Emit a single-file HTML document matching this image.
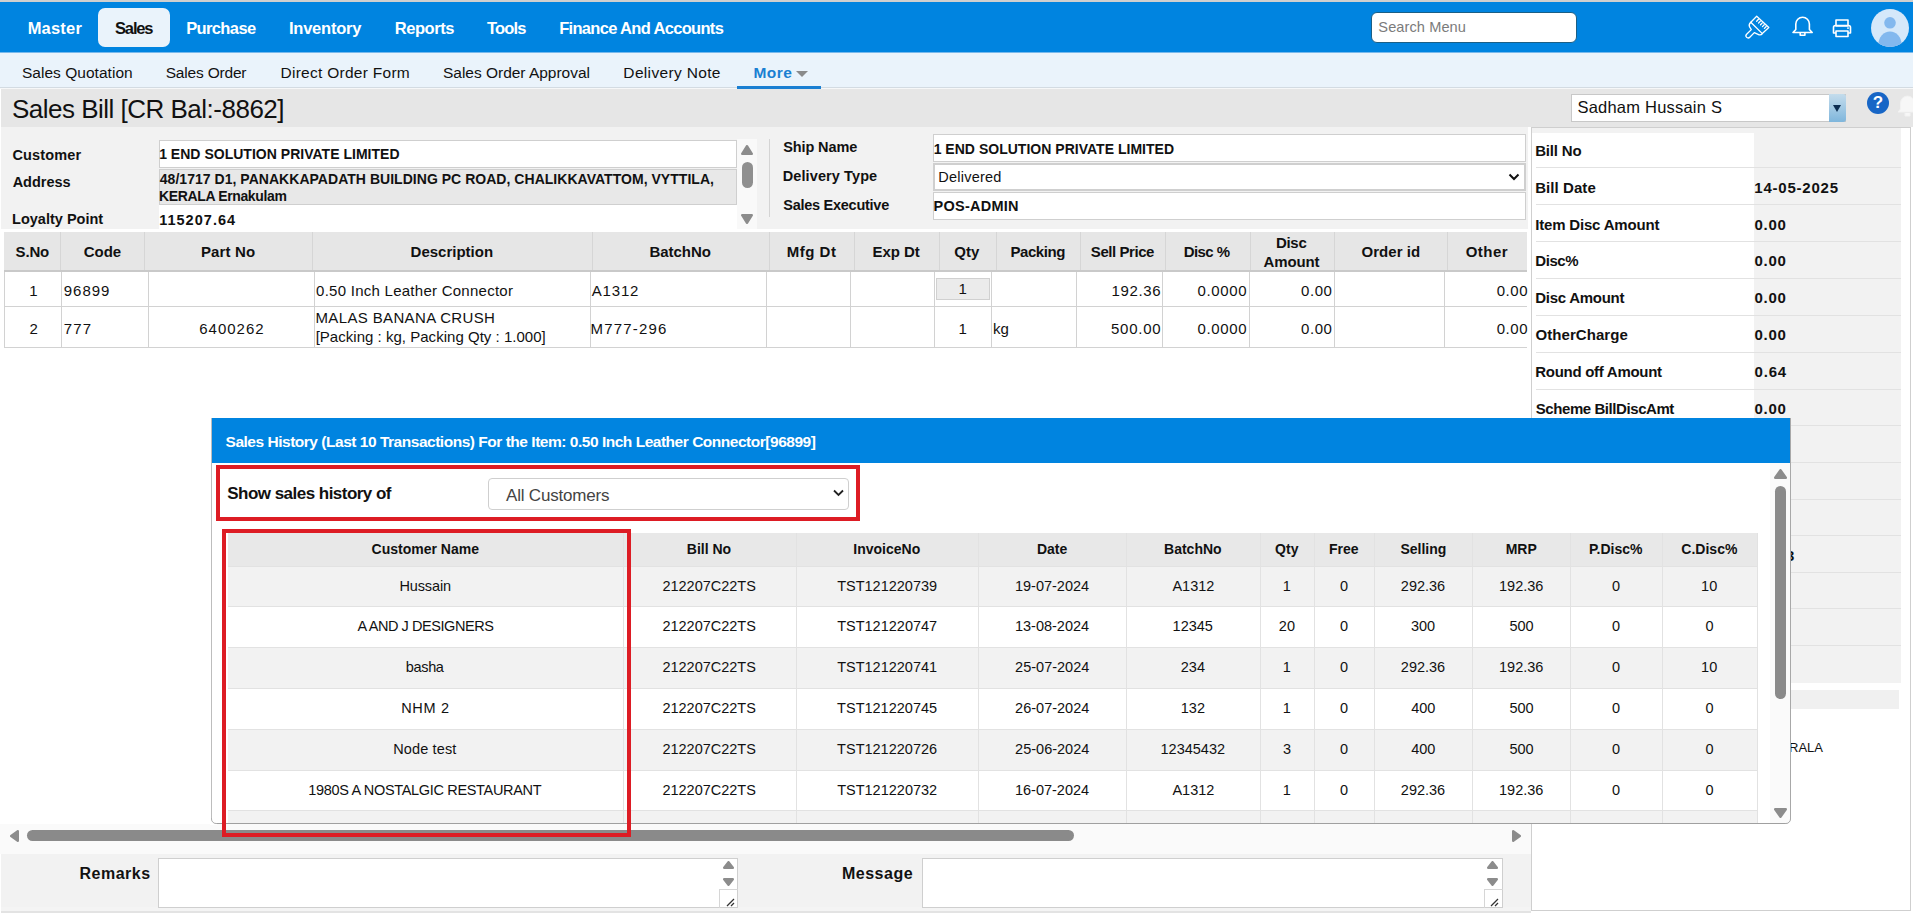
<!DOCTYPE html>
<html><head><meta charset="utf-8">
<style>
*{box-sizing:border-box;margin:0;padding:0}
html,body{width:1913px;height:913px;overflow:hidden;background:#fff;font-family:"Liberation Sans",sans-serif;color:#111}
.a{position:absolute}
.t{position:absolute;white-space:nowrap;line-height:1}
</style></head><body>
<div class="a" style="left:0px;top:0px;width:1913px;height:2px;background:#cfcfcf"></div>
<div class="a" style="left:0px;top:2px;width:1913px;height:50px;background:#0084e0"></div>
<div class="a" style="left:98px;top:8px;width:72px;height:39px;background:#eaf3fb;border-radius:7px"></div>
<div class="t" style="left:27.63px;top:20.43px;font-size:16.5px;font-weight:bold;color:#fff;letter-spacing:0.201px;">Master</div>
<div class="t" style="left:115.00px;top:20.43px;font-size:16.5px;font-weight:bold;letter-spacing:-1.152px;">Sales</div>
<div class="t" style="left:186.13px;top:20.43px;font-size:16.5px;font-weight:bold;color:#fff;letter-spacing:-0.614px;">Purchase</div>
<div class="t" style="left:288.93px;top:20.43px;font-size:16.5px;font-weight:bold;color:#fff;letter-spacing:-0.224px;">Inventory</div>
<div class="t" style="left:394.73px;top:20.43px;font-size:16.5px;font-weight:bold;color:#fff;letter-spacing:-0.426px;">Reports</div>
<div class="t" style="left:487.03px;top:20.43px;font-size:16.5px;font-weight:bold;color:#fff;letter-spacing:-0.852px;">Tools</div>
<div class="t" style="left:559.13px;top:20.43px;font-size:16.5px;font-weight:bold;color:#fff;letter-spacing:-0.674px;">Finance And Accounts</div>
<div class="a" style="left:1371px;top:12px;width:206px;height:31px;background:#fff;border:1px solid #1b5f86;border-radius:6px"></div>
<div class="t" style="left:1378.34px;top:19.64px;font-size:14.6px;color:#7b7b7b;letter-spacing:0.081px;">Search Menu</div>
<svg class="a" style="left:1740px;top:10px" width="36" height="34" viewBox="0 0 36 34">
<g fill="none" stroke="#fff" stroke-width="1.3" stroke-linejoin="round" stroke-linecap="round">
<path d="M16.7 6.3 L28.8 17.6 L22.3 23.6 L10.8 12.2 Z"/>
<path d="M10.8 12.2 Q8.3 14.6 9.6 16.8 L11.3 19.6 L6.6 24.2 A2.2 2.2 0 0 0 9.8 27.3 L14.3 22.6 L19.2 24.8 Q21.2 25.2 22.3 23.6"/>
<path d="M18.44 9.29 L16.66 11.19 M20.37 11.10 L18.60 13.00 M22.31 12.91 L20.53 14.81 M24.25 14.71 L22.47 16.62 M26.18 16.52 L24.41 18.42 "/>
</g></svg>
<svg class="a" style="left:1788px;top:10px" width="30" height="30" viewBox="0 0 30 30">
<g fill="none" stroke="#fff" stroke-width="1.6" stroke-linejoin="round">
<path d="M5 22.5 L7.8 19.5 L7.8 14 a6.8 6.8 0 0 1 13.6 0 L21.4 19.5 L24.2 22.5 Z"/>
<path d="M12.2 23 L12.2 25.3 L16.9 25.3 L16.9 23"/>
</g></svg>
<svg class="a" style="left:1828px;top:12px" width="28" height="28" viewBox="0 0 28 28">
<g fill="none" stroke="#fff" stroke-width="1.6" stroke-linejoin="round">
<rect x="8" y="8" width="12" height="6"/>
<path d="M8 21 L5.5 21 L5.5 15.5 a2 2 0 0 1 2 -2 L20.5 13.5 a2 2 0 0 1 2 2 L22.5 21 L20 21"/>
<rect x="8" y="19" width="12" height="5.5"/>
</g><rect x="19" y="15.5" width="2" height="1.2" fill="#fff"/></svg>
<svg class="a" style="left:1870px;top:8px" width="40" height="40" viewBox="0 0 40 40">
<defs><clipPath id="cc"><circle cx="20" cy="20" r="19"/></clipPath></defs>
<circle cx="20" cy="20" r="19" fill="#d5e8fa"/>
<g clip-path="url(#cc)" fill="#83b8ee"><circle cx="20" cy="14.8" r="5.8"/><ellipse cx="20" cy="36" rx="11.5" ry="12.5"/></g>
</svg>
<div class="a" style="left:0px;top:52px;width:1913px;height:35px;background:#eaf3fb"></div>
<div class="a" style="left:0px;top:52px;width:1913px;height:1px;background:#78b9ec"></div>
<div class="a" style="left:0px;top:87px;width:1913px;height:1px;background:#d3dbe2"></div>
<div class="a" style="left:0px;top:88px;width:1913px;height:1px;background:#f6f7f8"></div>
<div class="t" style="left:21.90px;top:64.98px;font-size:15.5px;letter-spacing:0.037px;">Sales Quotation</div>
<div class="t" style="left:165.70px;top:64.98px;font-size:15.5px;letter-spacing:-0.186px;">Sales Order</div>
<div class="t" style="left:280.46px;top:64.98px;font-size:15.5px;letter-spacing:0.276px;">Direct Order Form</div>
<div class="t" style="left:443.00px;top:64.98px;font-size:15.5px;letter-spacing:-0.017px;">Sales Order Approval</div>
<div class="t" style="left:623.36px;top:64.98px;font-size:15.5px;letter-spacing:0.336px;">Delivery Note</div>
<div class="t" style="left:753.39px;top:64.98px;font-size:15.5px;font-weight:bold;color:#1a7fd2;letter-spacing:0.502px;">More</div>
<div class="a" style="left:796px;top:71px;width:0;height:0;border-left:6.5px solid transparent;border-right:6.5px solid transparent;border-top:6px solid #8a8a8a"></div>
<div class="a" style="left:737px;top:86px;width:84px;height:3px;background:#1a7fd2"></div>
<div class="a" style="left:1px;top:89px;width:1912px;height:38px;background:#e6e6e6"></div>
<div class="t" style="left:11.93px;top:95.89px;font-size:26px;letter-spacing:-0.503px;">Sales Bill [CR Bal:-8862]</div>
<div class="a" style="left:1571px;top:94px;width:275px;height:28px;background:#fff;border:1px solid #c8c8c8"></div>
<div class="t" style="left:1577.46px;top:99.23px;font-size:16.5px;letter-spacing:0.216px;">Sadham Hussain S</div>
<div class="a" style="left:1829px;top:94px;width:17px;height:28px;background:linear-gradient(#c4dcec,#7fb6dc);border-radius:0 3px 3px 0"></div>
<div class="a" style="left:1833px;top:105px;width:0;height:0;border-left:4.5px solid transparent;border-right:4.5px solid transparent;border-top:7px solid #0d2e52"></div>
<svg class="a" style="left:1896px;top:92px" width="17" height="28" viewBox="0 0 17 28"><path d="M2 20 L4.5 17 L4.5 11 a7 7 0 0 1 14 0 L18.5 17 L21 20 Z M9 21 L9 24 L14 24 L14 21" fill="#f7f7f7" stroke="#f2f2f2" stroke-width="1"/></svg>
<div class="a" style="left:1867px;top:92px;width:22px;height:22px;border-radius:50%;background:#1766c6;color:#fff;font-weight:bold;font-size:17px;line-height:22px;text-align:center">?</div>
<div class="a" style="left:1px;top:127px;width:1527px;height:102px;background:#f2f2f2"></div>
<div class="t" style="left:12.42px;top:148.33px;font-size:14.5px;font-weight:bold;letter-spacing:0.155px;">Customer</div>
<div class="t" style="left:12.64px;top:174.63px;font-size:14.5px;font-weight:bold;letter-spacing:-0.010px;">Address</div>
<div class="t" style="left:12.06px;top:211.53px;font-size:14.5px;font-weight:bold;letter-spacing:0.008px;">Loyalty Point</div>
<div class="a" style="left:159px;top:140px;width:578px;height:28px;background:#fff;border:1px solid #cfcfcf"></div>
<div class="a" style="left:159px;top:169px;width:578px;height:36px;background:#e8e8e8;border:1px solid #cfcfcf"></div>
<div class="a" style="left:159px;top:205px;width:578px;height:24px;background:#fff"></div>
<div class="t" style="left:159.16px;top:146.85px;font-size:14px;font-weight:bold;letter-spacing:0.020px;">1 END SOLUTION PRIVATE LIMITED</div>
<div class="t" style="left:159.79px;top:171.95px;font-size:14px;font-weight:bold;letter-spacing:0.032px;">48/1717 D1, PANAKKAPADATH BUILDING PC ROAD, CHALIKKAVATTOM, VYTTILA,</div>
<div class="t" style="left:159.09px;top:188.85px;font-size:14px;font-weight:bold;letter-spacing:-0.369px;">KERALA Ernakulam</div>
<div class="t" style="left:159.13px;top:213.33px;font-size:14.5px;font-weight:bold;letter-spacing:1.028px;">115207.64</div>
<div class="a" style="left:737px;top:139px;width:20px;height:90px;background:#f9f9f9"></div>
<svg class="a" style="left:741px;top:145px" width="12" height="10" viewBox="0 0 12 10"><polygon points="6.00,1.20 10.80,8.80 1.20,8.80" fill="#8c8c8c" stroke="#8c8c8c" stroke-width="2.4" stroke-linejoin="round"/></svg>
<div class="a" style="left:742px;top:162px;width:11px;height:26px;background:#8f8f8f;border-radius:6px"></div>
<svg class="a" style="left:741px;top:214px" width="12" height="10" viewBox="0 0 12 10"><polygon points="1.20,1.20 10.80,1.20 6.00,8.80" fill="#8c8c8c" stroke="#8c8c8c" stroke-width="2.4" stroke-linejoin="round"/></svg>
<div class="a" style="left:769px;top:139px;width:1px;height:78px;background:#d4d4d4"></div>
<div class="t" style="left:783.27px;top:139.73px;font-size:14.5px;font-weight:bold;letter-spacing:-0.119px;">Ship Name</div>
<div class="t" style="left:782.76px;top:168.73px;font-size:14.5px;font-weight:bold;letter-spacing:0.101px;">Delivery Type</div>
<div class="t" style="left:783.27px;top:198.33px;font-size:14.5px;font-weight:bold;letter-spacing:-0.263px;">Sales Executive</div>
<div class="a" style="left:933px;top:134px;width:593px;height:28px;background:#fff;border:1px solid #cfcfcf"></div>
<div class="a" style="left:933px;top:163px;width:593px;height:28px;background:#fff;border:2px solid #cfcfcf"></div>
<div class="a" style="left:933px;top:192px;width:593px;height:28px;background:#fff;border:1px solid #cfcfcf"></div>
<div class="t" style="left:933.66px;top:141.65px;font-size:14px;font-weight:bold;letter-spacing:0.020px;">1 END SOLUTION PRIVATE LIMITED</div>
<div class="t" style="left:938.34px;top:169.73px;font-size:14.5px;letter-spacing:0.230px;">Delivered</div>
<div class="t" style="left:933.56px;top:199.23px;font-size:14.5px;font-weight:bold;letter-spacing:0.243px;">POS-ADMIN</div>
<svg class="a" style="left:1507px;top:171px" width="14" height="12" viewBox="0 0 14 12"><path d="M2.5 3.5 L7 8 L11.5 3.5" fill="none" stroke="#111" stroke-width="2"/></svg>
<div class="a" style="left:4px;top:232px;width:1523px;height:38px;background:#e6e6e6"></div>
<div class="a" style="left:4px;top:270px;width:1523px;height:2px;background:#c9c9c9"></div>
<div class="a" style="left:60px;top:232px;width:1px;height:38px;background:#d6d6d6"></div>
<div class="a" style="left:144px;top:232px;width:1px;height:38px;background:#d6d6d6"></div>
<div class="a" style="left:312px;top:232px;width:1px;height:38px;background:#d6d6d6"></div>
<div class="a" style="left:592px;top:232px;width:1px;height:38px;background:#d6d6d6"></div>
<div class="a" style="left:769px;top:232px;width:1px;height:38px;background:#d6d6d6"></div>
<div class="a" style="left:854px;top:232px;width:1px;height:38px;background:#d6d6d6"></div>
<div class="a" style="left:939px;top:232px;width:1px;height:38px;background:#d6d6d6"></div>
<div class="a" style="left:996px;top:232px;width:1px;height:38px;background:#d6d6d6"></div>
<div class="a" style="left:1080px;top:232px;width:1px;height:38px;background:#d6d6d6"></div>
<div class="a" style="left:1165px;top:232px;width:1px;height:38px;background:#d6d6d6"></div>
<div class="a" style="left:1250px;top:232px;width:1px;height:38px;background:#d6d6d6"></div>
<div class="a" style="left:1334px;top:232px;width:1px;height:38px;background:#d6d6d6"></div>
<div class="a" style="left:1447px;top:232px;width:1px;height:38px;background:#d6d6d6"></div>
<div class="a" style="left:4px;top:272px;width:1px;height:75px;background:#d2d2d2"></div>
<div class="a" style="left:61px;top:272px;width:1px;height:75px;background:#d2d2d2"></div>
<div class="a" style="left:148px;top:272px;width:1px;height:75px;background:#d2d2d2"></div>
<div class="a" style="left:314px;top:272px;width:1px;height:75px;background:#d2d2d2"></div>
<div class="a" style="left:590px;top:272px;width:1px;height:75px;background:#d2d2d2"></div>
<div class="a" style="left:766px;top:272px;width:1px;height:75px;background:#d2d2d2"></div>
<div class="a" style="left:850px;top:272px;width:1px;height:75px;background:#d2d2d2"></div>
<div class="a" style="left:934px;top:272px;width:1px;height:75px;background:#d2d2d2"></div>
<div class="a" style="left:991px;top:272px;width:1px;height:75px;background:#d2d2d2"></div>
<div class="a" style="left:1076px;top:272px;width:1px;height:75px;background:#d2d2d2"></div>
<div class="a" style="left:1162px;top:272px;width:1px;height:75px;background:#d2d2d2"></div>
<div class="a" style="left:1249px;top:272px;width:1px;height:75px;background:#d2d2d2"></div>
<div class="a" style="left:1334px;top:272px;width:1px;height:75px;background:#d2d2d2"></div>
<div class="a" style="left:1444px;top:272px;width:1px;height:75px;background:#d2d2d2"></div>
<div class="a" style="left:4px;top:306px;width:1523px;height:1px;background:#d2d2d2"></div>
<div class="a" style="left:4px;top:347px;width:1523px;height:1px;background:#d2d2d2"></div>
<div class="t" style="left:15.55px;top:244.10px;font-size:15px;font-weight:bold;letter-spacing:-0.158px;">S.No</div>
<div class="t" style="left:83.70px;top:244.10px;font-size:15px;font-weight:bold;letter-spacing:-0.025px;">Code</div>
<div class="t" style="left:200.93px;top:244.10px;font-size:15px;font-weight:bold;letter-spacing:0.158px;">Part No</div>
<div class="t" style="left:410.56px;top:244.10px;font-size:15px;font-weight:bold;">Description</div>
<div class="t" style="left:649.38px;top:244.10px;font-size:15px;font-weight:bold;letter-spacing:-0.012px;">BatchNo</div>
<div class="t" style="left:786.73px;top:244.10px;font-size:15px;font-weight:bold;letter-spacing:0.510px;">Mfg Dt</div>
<div class="t" style="left:872.57px;top:244.10px;font-size:15px;font-weight:bold;letter-spacing:-0.070px;">Exp Dt</div>
<div class="t" style="left:954.35px;top:244.10px;font-size:15px;font-weight:bold;">Qty</div>
<div class="t" style="left:1010.48px;top:244.10px;font-size:15px;font-weight:bold;letter-spacing:-0.429px;">Packing</div>
<div class="t" style="left:1090.85px;top:244.10px;font-size:15px;font-weight:bold;letter-spacing:-0.447px;">Sell Price</div>
<div class="t" style="left:1183.68px;top:244.10px;font-size:15px;font-weight:bold;letter-spacing:-0.570px;">Disc %</div>
<div class="t" style="left:1361.50px;top:244.10px;font-size:15px;font-weight:bold;letter-spacing:0.032px;">Order id</div>
<div class="t" style="left:1465.75px;top:244.10px;font-size:15px;font-weight:bold;letter-spacing:0.444px;">Other</div>
<div class="t" style="left:1275.92px;top:235.00px;font-size:15px;font-weight:bold;letter-spacing:-0.275px;">Disc</div>
<div class="t" style="left:1263.57px;top:253.80px;font-size:15px;font-weight:bold;letter-spacing:-0.160px;">Amount</div>
<div class="t" style="left:29.21px;top:282.80px;font-size:15px;">1</div>
<div class="t" style="left:29.44px;top:320.80px;font-size:15px;">2</div>
<div class="t" style="left:63.73px;top:282.80px;font-size:15px;letter-spacing:0.987px;">96899</div>
<div class="t" style="left:63.65px;top:320.80px;font-size:15px;letter-spacing:1.262px;">777</div>
<div class="t" style="left:199.15px;top:320.80px;font-size:15px;letter-spacing:1.025px;">6400262</div>
<div class="t" style="left:316.10px;top:282.80px;font-size:15px;letter-spacing:0.258px;">0.50 Inch Leather Connector</div>
<div class="t" style="left:315.50px;top:310.20px;font-size:15px;letter-spacing:0.357px;">MALAS BANANA CRUSH</div>
<div class="t" style="left:315.65px;top:329.00px;font-size:15px;letter-spacing:0.024px;">[Packing : kg, Packing Qty : 1.000]</div>
<div class="t" style="left:591.70px;top:282.80px;font-size:15px;letter-spacing:0.850px;">A1312</div>
<div class="t" style="left:590.50px;top:320.80px;font-size:15px;letter-spacing:1.186px;">M777-296</div>
<div class="a" style="left:936px;top:278px;width:54px;height:22px;background:#ebebeb;border:1px solid #d0d0d0"></div>
<div class="t" style="left:958.61px;top:281.30px;font-size:15px;">1</div>
<div class="t" style="left:958.61px;top:320.80px;font-size:15px;">1</div>
<div class="t" style="left:993.02px;top:320.80px;font-size:15px;">kg</div>
<div class="t" style="left:1111.38px;top:282.80px;font-size:15px;letter-spacing:0.685px;">192.36</div>
<div class="t" style="left:1111.00px;top:320.80px;font-size:15px;letter-spacing:0.745px;">500.00</div>
<div class="t" style="left:1197.40px;top:282.80px;font-size:15px;letter-spacing:0.645px;">0.0000</div>
<div class="t" style="left:1301.10px;top:282.80px;font-size:15px;letter-spacing:0.550px;">0.00</div>
<div class="t" style="left:1496.70px;top:282.80px;font-size:15px;letter-spacing:0.550px;">0.00</div>
<div class="t" style="left:1197.40px;top:320.80px;font-size:15px;letter-spacing:0.645px;">0.0000</div>
<div class="t" style="left:1301.10px;top:320.80px;font-size:15px;letter-spacing:0.550px;">0.00</div>
<div class="t" style="left:1496.70px;top:320.80px;font-size:15px;letter-spacing:0.550px;">0.00</div>
<div class="a" style="left:1531px;top:127px;width:380px;height:784px;background:#fff;border:1px solid #cfcfcf"></div>
<div class="a" style="left:1532px;top:128px;width:369px;height:5px;background:#f2f2f2"></div>
<div class="a" style="left:1754px;top:133px;width:147px;height:550px;background:#f2f2f2"></div>
<div class="t" style="left:1535.23px;top:142.80px;font-size:15px;font-weight:bold;letter-spacing:-0.183px;">Bill No</div>
<div class="a" style="left:1536px;top:167px;width:365px;height:1px;background:#e2e2e2"></div>
<div class="t" style="left:1535.23px;top:179.67px;font-size:15px;font-weight:bold;letter-spacing:0.062px;">Bill Date</div>
<div class="t" style="left:1754.30px;top:179.67px;font-size:15px;font-weight:bold;letter-spacing:0.783px;">14-05-2025</div>
<div class="a" style="left:1536px;top:204px;width:365px;height:1px;background:#e2e2e2"></div>
<div class="t" style="left:1535.23px;top:216.54px;font-size:15px;font-weight:bold;letter-spacing:-0.185px;">Item Disc Amount</div>
<div class="t" style="left:1754.60px;top:216.54px;font-size:15px;font-weight:bold;letter-spacing:0.675px;">0.00</div>
<div class="a" style="left:1536px;top:241px;width:365px;height:1px;background:#e2e2e2"></div>
<div class="t" style="left:1535.23px;top:253.41px;font-size:15px;font-weight:bold;letter-spacing:-0.412px;">Disc%</div>
<div class="t" style="left:1754.60px;top:253.41px;font-size:15px;font-weight:bold;letter-spacing:0.675px;">0.00</div>
<div class="a" style="left:1536px;top:278px;width:365px;height:1px;background:#e2e2e2"></div>
<div class="t" style="left:1535.23px;top:290.28px;font-size:15px;font-weight:bold;letter-spacing:-0.275px;">Disc Amount</div>
<div class="t" style="left:1754.60px;top:290.28px;font-size:15px;font-weight:bold;letter-spacing:0.675px;">0.00</div>
<div class="a" style="left:1536px;top:315px;width:365px;height:1px;background:#e2e2e2"></div>
<div class="t" style="left:1535.60px;top:327.15px;font-size:15px;font-weight:bold;letter-spacing:0.047px;">OtherCharge</div>
<div class="t" style="left:1754.60px;top:327.15px;font-size:15px;font-weight:bold;letter-spacing:0.675px;">0.00</div>
<div class="a" style="left:1536px;top:352px;width:365px;height:1px;background:#e2e2e2"></div>
<div class="t" style="left:1535.23px;top:364.02px;font-size:15px;font-weight:bold;letter-spacing:-0.280px;">Round off Amount</div>
<div class="t" style="left:1754.60px;top:364.02px;font-size:15px;font-weight:bold;letter-spacing:0.767px;">0.64</div>
<div class="a" style="left:1536px;top:389px;width:365px;height:1px;background:#e2e2e2"></div>
<div class="t" style="left:1535.75px;top:400.89px;font-size:15px;font-weight:bold;letter-spacing:-0.428px;">Scheme BillDiscAmt</div>
<div class="t" style="left:1754.60px;top:400.89px;font-size:15px;font-weight:bold;letter-spacing:0.675px;">0.00</div>
<div class="a" style="left:1536px;top:425px;width:365px;height:1px;background:#e2e2e2"></div>
<div class="a" style="left:1536px;top:462px;width:365px;height:1px;background:#e2e2e2"></div>
<div class="a" style="left:1536px;top:499px;width:365px;height:1px;background:#e2e2e2"></div>
<div class="a" style="left:1536px;top:535px;width:365px;height:1px;background:#e2e2e2"></div>
<div class="a" style="left:1536px;top:572px;width:365px;height:1px;background:#e2e2e2"></div>
<div class="a" style="left:1536px;top:608px;width:365px;height:1px;background:#e2e2e2"></div>
<div class="a" style="left:1536px;top:645px;width:365px;height:1px;background:#e2e2e2"></div>
<div class="a" style="left:1540px;top:690px;width:359px;height:19px;background:#f0f0f0"></div>
<div class="t" style="left:1786.12px;top:548.30px;font-size:15px;font-weight:bold;">3</div>
<div class="t" style="left:1788.96px;top:741.00px;font-size:13px;letter-spacing:0.037px;">RALA</div>
<div class="a" style="left:0px;top:824px;width:1531px;height:30px;background:#fafafa"></div>
<svg class="a" style="left:10px;top:830px" width="9" height="12" viewBox="0 0 9 12"><polygon points="1.20,6.00 7.80,1.20 7.80,10.80" fill="#8c8c8c" stroke="#8c8c8c" stroke-width="2.4" stroke-linejoin="round"/></svg>
<div class="a" style="left:27px;top:830px;width:1047px;height:11px;background:#8a8a8a;border-radius:6px"></div>
<svg class="a" style="left:1512px;top:830px" width="9" height="12" viewBox="0 0 9 12"><polygon points="1.20,1.20 7.80,6.00 1.20,10.80" fill="#8c8c8c" stroke="#8c8c8c" stroke-width="2.4" stroke-linejoin="round"/></svg>
<div class="a" style="left:1px;top:854px;width:1530px;height:57px;background:#f2f2f2"></div>
<div class="a" style="left:1px;top:907px;width:1530px;height:4px;background:#f4f4f4"></div>
<div class="a" style="left:1px;top:911px;width:1530px;height:2px;background:#e3e3e3"></div>
<div class="t" style="left:79.46px;top:866.06px;font-size:16px;font-weight:bold;letter-spacing:0.513px;">Remarks</div>
<div class="t" style="left:841.96px;top:866.46px;font-size:16px;font-weight:bold;letter-spacing:0.500px;">Message</div>
<div class="a" style="left:158px;top:858px;width:580.4px;height:50px;background:#fff;border:1px solid #cfcfcf"></div>
<svg class="a" style="left:723px;top:861px" width="11" height="8" viewBox="0 0 11 8"><polygon points="5.50,1.20 9.80,6.80 1.20,6.80" fill="#8c8c8c" stroke="#8c8c8c" stroke-width="2.4" stroke-linejoin="round"/></svg>
<svg class="a" style="left:723px;top:878px" width="11" height="8" viewBox="0 0 11 8"><polygon points="1.20,1.20 9.80,1.20 5.50,6.80" fill="#8c8c8c" stroke="#8c8c8c" stroke-width="2.4" stroke-linejoin="round"/></svg>
<div class="a" style="left:719px;top:889px;width:19px;height:19px;border-left:1px solid #d6d6d6;border-top:1px solid #d6d6d6"></div>
<svg class="a" style="left:726px;top:897px" width="10" height="10" viewBox="0 0 10 10"><path d="M1 9 L8 2 M5 9 L8 6" stroke="#333" stroke-width="1.3"/></svg>
<div class="a" style="left:922px;top:858px;width:580.5px;height:50px;background:#fff;border:1px solid #cfcfcf"></div>
<svg class="a" style="left:1487px;top:861px" width="11" height="8" viewBox="0 0 11 8"><polygon points="5.50,1.20 9.80,6.80 1.20,6.80" fill="#8c8c8c" stroke="#8c8c8c" stroke-width="2.4" stroke-linejoin="round"/></svg>
<svg class="a" style="left:1487px;top:878px" width="11" height="8" viewBox="0 0 11 8"><polygon points="1.20,1.20 9.80,1.20 5.50,6.80" fill="#8c8c8c" stroke="#8c8c8c" stroke-width="2.4" stroke-linejoin="round"/></svg>
<div class="a" style="left:1484px;top:889px;width:19px;height:19px;border-left:1px solid #d6d6d6;border-top:1px solid #d6d6d6"></div>
<svg class="a" style="left:1490px;top:897px" width="10" height="10" viewBox="0 0 10 10"><path d="M1 9 L8 2 M5 9 L8 6" stroke="#333" stroke-width="1.3"/></svg>
<div class="a" style="left:211.5px;top:418px;width:1579.0px;height:405px;background:#fff">
</div>
<div class="a" style="left:211.5px;top:418px;width:1579px;height:45px;background:#0084e0"></div>
<div class="t" style="left:225.53px;top:433.68px;font-size:15.5px;font-weight:bold;color:#fff;letter-spacing:-0.478px;">Sales History (Last 10 Transactions) For the Item: 0.50 Inch Leather Connector[96899]</div>
<div class="a" style="left:216px;top:465px;width:643.5px;height:55.5px;border:4.6px solid #dd1c24"></div>
<div class="t" style="left:227.29px;top:485.21px;font-size:17px;font-weight:bold;letter-spacing:-0.528px;">Show sales history of</div>
<div class="a" style="left:487.5px;top:478px;width:361px;height:32px;background:#fff;border:1px solid #cfcfcf;border-radius:4px"></div>
<div class="t" style="left:506.00px;top:487.41px;font-size:17px;color:#444;letter-spacing:-0.186px;">All Customers</div>
<svg class="a" style="left:832px;top:488px" width="13" height="10" viewBox="0 0 13 10"><path d="M2 2.5 L6.5 7 L11 2.5" fill="none" stroke="#222" stroke-width="1.8"/></svg>
<div class="a" style="left:228px;top:533px;width:1529.4px;height:32.6px;background:#e8e8e8"></div>
<div class="a" style="left:228px;top:566px;width:1529.4px;height:40px;background:#f2f2f2;border-top:1px solid #e2e2e2"></div>
<div class="a" style="left:228px;top:606px;width:1529.4px;height:41px;background:#fff;border-top:1px solid #e2e2e2"></div>
<div class="a" style="left:228px;top:647px;width:1529.4px;height:41px;background:#f2f2f2;border-top:1px solid #e2e2e2"></div>
<div class="a" style="left:228px;top:688px;width:1529.4px;height:41px;background:#fff;border-top:1px solid #e2e2e2"></div>
<div class="a" style="left:228px;top:729px;width:1529.4px;height:41px;background:#f2f2f2;border-top:1px solid #e2e2e2"></div>
<div class="a" style="left:228px;top:770px;width:1529.4px;height:40px;background:#fff;border-top:1px solid #e2e2e2"></div>
<div class="a" style="left:228px;top:810px;width:1529.4px;height:13px;background:#f2f2f2;border-top:1px solid #e2e2e2"></div>
<div class="a" style="left:623px;top:533px;width:1px;height:290px;background:#e2e2e2"></div>
<div class="a" style="left:796px;top:533px;width:1px;height:290px;background:#e2e2e2"></div>
<div class="a" style="left:978px;top:533px;width:1px;height:290px;background:#e2e2e2"></div>
<div class="a" style="left:1126px;top:533px;width:1px;height:290px;background:#e2e2e2"></div>
<div class="a" style="left:1260px;top:533px;width:1px;height:290px;background:#e2e2e2"></div>
<div class="a" style="left:1314px;top:533px;width:1px;height:290px;background:#e2e2e2"></div>
<div class="a" style="left:1374px;top:533px;width:1px;height:290px;background:#e2e2e2"></div>
<div class="a" style="left:1472px;top:533px;width:1px;height:290px;background:#e2e2e2"></div>
<div class="a" style="left:1570px;top:533px;width:1px;height:290px;background:#e2e2e2"></div>
<div class="a" style="left:1662px;top:533px;width:1px;height:290px;background:#e2e2e2"></div>
<div class="a" style="left:1757px;top:533px;width:1px;height:290px;background:#e2e2e2"></div>
<div class="t" style="left:371.62px;top:542.05px;font-size:14px;font-weight:bold;">Customer Name</div>
<div class="t" style="left:686.82px;top:542.05px;font-size:14px;font-weight:bold;">Bill No</div>
<div class="t" style="left:853.32px;top:542.05px;font-size:14px;font-weight:bold;">InvoiceNo</div>
<div class="t" style="left:1036.98px;top:542.05px;font-size:14px;font-weight:bold;">Date</div>
<div class="t" style="left:1164.05px;top:542.05px;font-size:14px;font-weight:bold;">BatchNo</div>
<div class="t" style="left:1275.10px;top:542.05px;font-size:14px;font-weight:bold;">Qty</div>
<div class="t" style="left:1329.07px;top:542.05px;font-size:14px;font-weight:bold;">Free</div>
<div class="t" style="left:1400.38px;top:542.05px;font-size:14px;font-weight:bold;">Selling</div>
<div class="t" style="left:1505.71px;top:542.05px;font-size:14px;font-weight:bold;">MRP</div>
<div class="t" style="left:1588.98px;top:542.05px;font-size:14px;font-weight:bold;">P.Disc%</div>
<div class="t" style="left:1681.35px;top:542.05px;font-size:14px;font-weight:bold;">C.Disc%</div>
<div class="t" style="left:399.39px;top:578.53px;font-size:14.5px;letter-spacing:-0.107px;">Hussain</div>
<div class="t" style="left:662.39px;top:578.53px;font-size:14.5px;">212207C22TS</div>
<div class="t" style="left:837.14px;top:578.53px;font-size:14.5px;">TST121220739</div>
<div class="t" style="left:1014.94px;top:578.53px;font-size:14.5px;">19-07-2024</div>
<div class="t" style="left:1172.41px;top:578.53px;font-size:14.5px;">A1312</div>
<div class="t" style="left:1282.76px;top:578.53px;font-size:14.5px;">1</div>
<div class="t" style="left:1339.99px;top:578.53px;font-size:14.5px;">0</div>
<div class="t" style="left:1400.84px;top:578.53px;font-size:14.5px;">292.36</div>
<div class="t" style="left:1499.06px;top:578.53px;font-size:14.5px;">192.36</div>
<div class="t" style="left:1611.94px;top:578.53px;font-size:14.5px;">0</div>
<div class="t" style="left:1701.11px;top:578.53px;font-size:14.5px;">10</div>
<div class="t" style="left:357.45px;top:619.33px;font-size:14.5px;letter-spacing:-0.435px;">A AND J DESIGNERS</div>
<div class="t" style="left:662.39px;top:619.33px;font-size:14.5px;">212207C22TS</div>
<div class="t" style="left:837.18px;top:619.33px;font-size:14.5px;">TST121220747</div>
<div class="t" style="left:1014.94px;top:619.33px;font-size:14.5px;">13-08-2024</div>
<div class="t" style="left:1172.59px;top:619.33px;font-size:14.5px;">12345</div>
<div class="t" style="left:1278.84px;top:619.33px;font-size:14.5px;">20</div>
<div class="t" style="left:1339.99px;top:619.33px;font-size:14.5px;">0</div>
<div class="t" style="left:1410.99px;top:619.33px;font-size:14.5px;">300</div>
<div class="t" style="left:1509.39px;top:619.33px;font-size:14.5px;">500</div>
<div class="t" style="left:1611.94px;top:619.33px;font-size:14.5px;">0</div>
<div class="t" style="left:1705.39px;top:619.33px;font-size:14.5px;">0</div>
<div class="t" style="left:405.81px;top:660.13px;font-size:14.5px;letter-spacing:-0.342px;">basha</div>
<div class="t" style="left:662.39px;top:660.13px;font-size:14.5px;">212207C22TS</div>
<div class="t" style="left:837.14px;top:660.13px;font-size:14.5px;">TST121220741</div>
<div class="t" style="left:1015.12px;top:660.13px;font-size:14.5px;">25-07-2024</div>
<div class="t" style="left:1180.78px;top:660.13px;font-size:14.5px;">234</div>
<div class="t" style="left:1282.76px;top:660.13px;font-size:14.5px;">1</div>
<div class="t" style="left:1339.99px;top:660.13px;font-size:14.5px;">0</div>
<div class="t" style="left:1400.84px;top:660.13px;font-size:14.5px;">292.36</div>
<div class="t" style="left:1499.06px;top:660.13px;font-size:14.5px;">192.36</div>
<div class="t" style="left:1611.94px;top:660.13px;font-size:14.5px;">0</div>
<div class="t" style="left:1701.11px;top:660.13px;font-size:14.5px;">10</div>
<div class="t" style="left:401.19px;top:700.93px;font-size:14.5px;letter-spacing:0.697px;">NHM 2</div>
<div class="t" style="left:662.39px;top:700.93px;font-size:14.5px;">212207C22TS</div>
<div class="t" style="left:837.11px;top:700.93px;font-size:14.5px;">TST121220745</div>
<div class="t" style="left:1015.12px;top:700.93px;font-size:14.5px;">26-07-2024</div>
<div class="t" style="left:1180.75px;top:700.93px;font-size:14.5px;">132</div>
<div class="t" style="left:1282.76px;top:700.93px;font-size:14.5px;">1</div>
<div class="t" style="left:1339.99px;top:700.93px;font-size:14.5px;">0</div>
<div class="t" style="left:1411.14px;top:700.93px;font-size:14.5px;">400</div>
<div class="t" style="left:1509.39px;top:700.93px;font-size:14.5px;">500</div>
<div class="t" style="left:1611.94px;top:700.93px;font-size:14.5px;">0</div>
<div class="t" style="left:1705.39px;top:700.93px;font-size:14.5px;">0</div>
<div class="t" style="left:393.29px;top:741.73px;font-size:14.5px;letter-spacing:0.122px;">Node test</div>
<div class="t" style="left:662.39px;top:741.73px;font-size:14.5px;">212207C22TS</div>
<div class="t" style="left:837.11px;top:741.73px;font-size:14.5px;">TST121220726</div>
<div class="t" style="left:1015.12px;top:741.73px;font-size:14.5px;">25-06-2024</div>
<div class="t" style="left:1160.56px;top:741.73px;font-size:14.5px;">12345432</div>
<div class="t" style="left:1282.98px;top:741.73px;font-size:14.5px;">3</div>
<div class="t" style="left:1339.99px;top:741.73px;font-size:14.5px;">0</div>
<div class="t" style="left:1411.14px;top:741.73px;font-size:14.5px;">400</div>
<div class="t" style="left:1509.39px;top:741.73px;font-size:14.5px;">500</div>
<div class="t" style="left:1611.94px;top:741.73px;font-size:14.5px;">0</div>
<div class="t" style="left:1705.39px;top:741.73px;font-size:14.5px;">0</div>
<div class="t" style="left:308.36px;top:782.53px;font-size:14.5px;letter-spacing:-0.327px;">1980S A NOSTALGIC RESTAURANT</div>
<div class="t" style="left:662.39px;top:782.53px;font-size:14.5px;">212207C22TS</div>
<div class="t" style="left:837.18px;top:782.53px;font-size:14.5px;">TST121220732</div>
<div class="t" style="left:1014.94px;top:782.53px;font-size:14.5px;">16-07-2024</div>
<div class="t" style="left:1172.41px;top:782.53px;font-size:14.5px;">A1312</div>
<div class="t" style="left:1282.76px;top:782.53px;font-size:14.5px;">1</div>
<div class="t" style="left:1339.99px;top:782.53px;font-size:14.5px;">0</div>
<div class="t" style="left:1400.84px;top:782.53px;font-size:14.5px;">292.36</div>
<div class="t" style="left:1499.06px;top:782.53px;font-size:14.5px;">192.36</div>
<div class="t" style="left:1611.94px;top:782.53px;font-size:14.5px;">0</div>
<div class="t" style="left:1705.39px;top:782.53px;font-size:14.5px;">0</div>
<div class="a" style="left:1770px;top:463px;width:20px;height:360px;background:#fafafa"></div>
<svg class="a" style="left:1774px;top:469px" width="13" height="10" viewBox="0 0 13 10"><polygon points="6.50,1.20 11.80,8.80 1.20,8.80" fill="#8c8c8c" stroke="#8c8c8c" stroke-width="2.4" stroke-linejoin="round"/></svg>
<div class="a" style="left:1775px;top:486px;width:11px;height:213px;background:#8a8a8a;border-radius:6px"></div>
<svg class="a" style="left:1774px;top:808px" width="13" height="10" viewBox="0 0 13 10"><polygon points="1.20,1.20 11.80,1.20 6.50,8.80" fill="#8c8c8c" stroke="#8c8c8c" stroke-width="2.4" stroke-linejoin="round"/></svg>
<div class="a" style="left:1790px;top:418px;width:1px;height:405px;background:#a8a8a8"></div>
<div class="a" style="left:211px;top:418px;width:1px;height:405px;background:#bdbdbd"></div>
<div class="a" style="left:211px;top:823px;width:1580px;height:1px;background:#a0a0a0"></div>
<div class="a" style="left:221.5px;top:529px;width:409px;height:307.5px;border:4.6px solid #dd1c24"></div>
<svg class="a" style="left:210px;top:818px" width="7" height="7" viewBox="0 0 7 7"><path d="M0 0 L1.5 0 L1.5 1 A4.5 4.5 0 0 0 6 5.5 L7 5.5 L7 7 L0 7 Z" fill="#fff"/><path d="M1.5 0 L1.5 1 A4.5 4.5 0 0 0 6 5.5 L7 5.5" fill="none" stroke="#b0b0b0" stroke-width="1"/></svg>
<svg class="a" style="left:1785px;top:818px" width="7" height="7" viewBox="0 0 7 7"><path d="M7 0 L5.5 0 L5.5 1 A4.5 4.5 0 0 1 1 5.5 L0 5.5 L0 7 L7 7 Z" fill="#fff"/><path d="M5.5 0 L5.5 1 A4.5 4.5 0 0 1 1 5.5 L0 5.5" fill="none" stroke="#a8a8a8" stroke-width="1"/></svg>
</body></html>
